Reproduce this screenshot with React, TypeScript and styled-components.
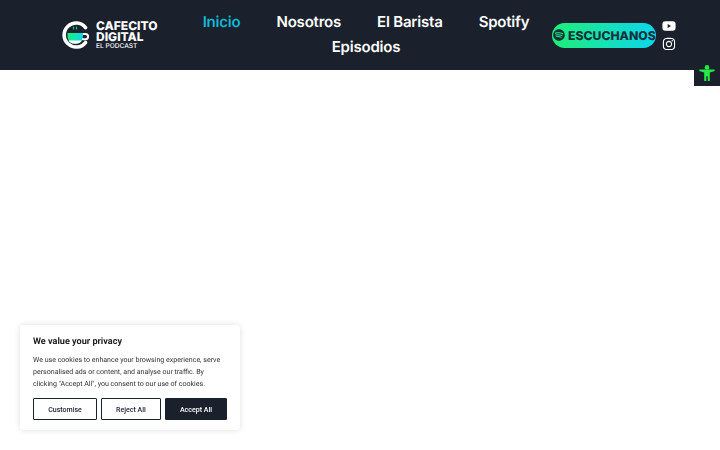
import { createGlobalStyle, styled } from 'styled-components';
import { FaInstagram, FaSpotify, FaYoutube } from 'react-icons/fa';

const GlobalStyle = createGlobalStyle`
  html, body {
    margin: 0;
    background: #fff;
    font-family: 'Roboto', 'Liberation Sans', sans-serif;
    text-rendering: geometricPrecision;
  }
`;

const Header = styled.header`
  display: flex;
  align-items: center;
  height: 70px;
  padding-left: 62px;
  background: #1a202c;
  box-shadow: 0 0 2px rgba(0, 0, 0, 0.3);
`;

const Logo = styled.a`
  display: flex;
  align-items: center;
  gap: 6px;
  width: 122px;
  flex: none;
  color: #fff;
`;

const LogoText = styled.div`
  display: flex;
  flex-direction: column;
  font-family: 'Inter', sans-serif;
`;

const LogoTitle = styled.span`
  font-size: 12px;
  line-height: 11px;
  font-weight: 800;
  white-space: nowrap;
`;

const LogoTag = styled.span`
  font-size: 6.6px;
  line-height: 8px;
  font-weight: 500;
  white-space: nowrap;
`;

const Nav = styled.nav`
  display: flex;
  flex-wrap: wrap;
  justify-content: center;
  width: 364px;
  margin-bottom: 2px;
  flex: none;
`;

const NavLink = styled.a<{ $active?: boolean }>`
  padding: 0 18px;
  font-family: 'Inter', sans-serif;
  font-size: 15px;
  letter-spacing: -0.2px;
  line-height: 25px;
  font-weight: 600;
  color: ${({ $active }) => ($active ? '#11b8d4' : '#fff')};
`;

const Listen = styled.a`
  display: flex;
  align-items: center;
  gap: 3px;
  width: 104px;
  height: 25px;
  margin-left: 4px;
  padding-left: 1px;
  box-sizing: border-box;
  flex: none;
  border-radius: 13px;
  background: linear-gradient(90deg, #1fee78, #0cd6ee);
  color: #14303a;
  font-family: 'Inter', sans-serif;
  font-size: 12.2px;
  font-weight: 800;
  white-space: nowrap;
  svg {
    flex: none;
  }
`;

const Socials = styled.div`
  display: flex;
  flex-direction: column;
  align-items: center;
  gap: 4px;
  margin-left: 6px;
  color: #fff;
  font-size: 14px;
  line-height: 0;
`;

const Social = styled.a`
  display: block;
`;

const A11yButton = styled.button`
  position: fixed;
  top: 60px;
  right: 0;
  width: 26px;
  height: 26px;
  padding: 0;
  border: 0;
  display: flex;
  align-items: center;
  justify-content: center;
  background: #1a202c;
`;

const CookieCard = styled.section`
  position: fixed;
  left: 20px;
  top: 325px;
  width: 220px;
  height: 105px;
  padding: 10px 13px 0;
  box-sizing: border-box;
  background: #fff;
  border-radius: 4px;
  box-shadow: 0 0 6px rgba(0, 0, 0, 0.13);
  color: #212121;
`;

const CookieTitle = styled.h2`
  margin: 0 0 5px;
  font-size: 9.1px;
  line-height: 14px;
  font-weight: 700;
`;

const CookieBody = styled.p`
  margin: 0 0 8px;
  font-size: 7.05px;
  line-height: 12px;
  color: #333;
  white-space: nowrap;
`;

const CookieActions = styled.div`
  display: flex;
  gap: 4px;
`;

const CookieButton = styled.button<{ $solid?: boolean; $w: number }>`
  width: ${({ $w }) => $w}px;
  height: 22px;
  padding: 0;
  box-sizing: border-box;
  border: 1.5px solid #1a202c;
  background: ${({ $solid }) => ($solid ? '#1a202c' : '#fff')};
  color: ${({ $solid }) => ($solid ? '#fff' : '#1a202c')};
  font-family: inherit;
  font-size: 7.05px;
  font-weight: 500;
  border-radius: 1px;
`;

const CupMark = () => (
  <svg width="28" height="28" viewBox="0 0 28 28" fill="none">
    <defs>
      <linearGradient id="cup" x1="0" x2="1" y1="0" y2="0">
        <stop offset="0" stopColor="#1fee78" />
        <stop offset="1" stopColor="#0cd6ee" />
      </linearGradient>
    </defs>
    <path d="M23.5 6.5A12 12 0 1 0 23.5 21.5" stroke="#fff" strokeWidth="3.6" strokeLinecap="round" />
    <path d="M5.5 12h15.5v3.5a7.75 7.5 0 0 1-15.5 0z" fill="url(#cup)" />
    <path d="M6.4 19.5h13.7a7.75 6 0 0 1-13.7 0z" fill="#fff" />
    <path d="M21 13h2.5a2.6 2.6 0 0 1 0 5.2H20" stroke="#fff" strokeWidth="2" />
    <path d="M11.5 5.5v3M14.5 5.5v3" stroke="#1fbf7f" strokeWidth="1.2" />
  </svg>
);

const AccessibilityIcon = () => (
  <svg width="18" height="18" viewBox="0 0 18 18" fill="#25ea45">
    <circle cx="9" cy="3.4" r="2.3" />
    <path d="M1.5 5.6l15-.1.3 1.6-5 1.4V17H9.7v-4.7H8.3V17H6.2V8.5l-5-1.4z" />
  </svg>
);

export default function App() {
  return (
    <>
      <GlobalStyle />
      <Header>
        <Logo>
          <CupMark />
          <LogoText>
            <LogoTitle>CAFECITO</LogoTitle>
            <LogoTitle>DIGITAL</LogoTitle>
            <LogoTag>EL PODCAST</LogoTag>
          </LogoText>
        </Logo>
        <Nav>
          <NavLink $active>Inicio</NavLink>
          <NavLink>Nosotros</NavLink>
          <NavLink>El Barista</NavLink>
          <NavLink>Spotify</NavLink>
          <NavLink>Episodios</NavLink>
        </Nav>
        <Listen>
          <FaSpotify size={12} color="#14303a" />
          ESCUCHANOS
        </Listen>
        <Socials>
          <Social><FaYoutube /></Social>
          <Social><FaInstagram /></Social>
        </Socials>
      </Header>
      <A11yButton aria-label="Accessibility">
        <AccessibilityIcon />
      </A11yButton>
      <CookieCard>
        <CookieTitle>We value your privacy</CookieTitle>
        <CookieBody>
          We use cookies to enhance your browsing experience, serve<br />
          personalised ads or content, and analyse our traffic. By<br />
          clicking "Accept All", you consent to our use of cookies.
        </CookieBody>
        <CookieActions>
          <CookieButton $w={64}>Customise</CookieButton>
          <CookieButton $w={60}>Reject All</CookieButton>
          <CookieButton $w={62} $solid>Accept All</CookieButton>
        </CookieActions>
      </CookieCard>
    </>
  );
}
